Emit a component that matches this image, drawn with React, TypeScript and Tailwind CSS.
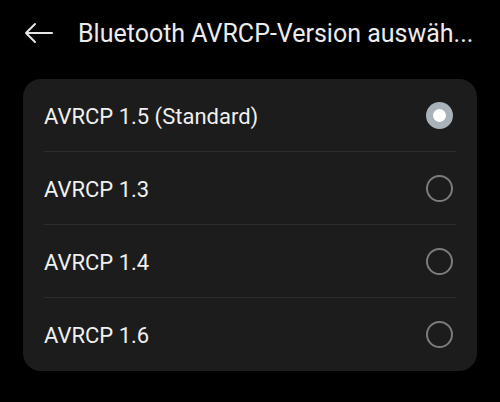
import { useState } from 'react';

const options = ['AVRCP 1.5 (Standard)', 'AVRCP 1.3', 'AVRCP 1.4', 'AVRCP 1.6'];

function Radio({ checked }: { checked: boolean }) {
  if (checked) {
    return (
      <span className="mr-[3px] flex h-[27px] w-[27px] items-center justify-center rounded-full bg-[#a9b1b9]">
        <span className="h-[13px] w-[13px] rounded-full bg-white" />
      </span>
    );
  }
  return <span className="mr-[3px] h-[27px] w-[27px] rounded-full border-2 border-[#7c7c7c]" />;
}

export default function App() {
  const [selected, setSelected] = useState(0);

  return (
    <div className="min-h-screen w-[500px] bg-black font-['Roboto',sans-serif] text-[#ececec]">
      {/* Header */}
      <div className="flex h-[66px] items-center">
        <svg className="ml-[24px] h-[24px] w-[30px] shrink-0" viewBox="0 0 30 24" fill="none" stroke="#e6e6e6" strokeWidth="2" strokeLinecap="round" strokeLinejoin="round">
          <path d="M28 12H2M11 3L2 12l9 9" />
        </svg>
        <h1 className="ml-[24px] whitespace-nowrap text-[25px] leading-none">Bluetooth AVRCP-Version auswäh...</h1>
      </div>

      {/* Options */}
      <div className="mx-[23px] mt-[13px] rounded-[18px] bg-[#1c1c1c]">
        {options.map((opt, idx) => (
          <button
            key={opt}
            onClick={() => setSelected(idx)}
            className="flex h-[73px] w-full items-center px-[21px] text-left"
          >
            <div className={`flex h-full flex-1 items-center ${idx < options.length - 1 ? 'border-b border-[#2c2c2c]' : ''}`}>
              <span className="flex-1 pt-[2px] text-[22px] text-[#f0f0f0]">{opt}</span>
              <Radio checked={selected === idx} />
            </div>
          </button>
        ))}
      </div>
    </div>
  );
}
